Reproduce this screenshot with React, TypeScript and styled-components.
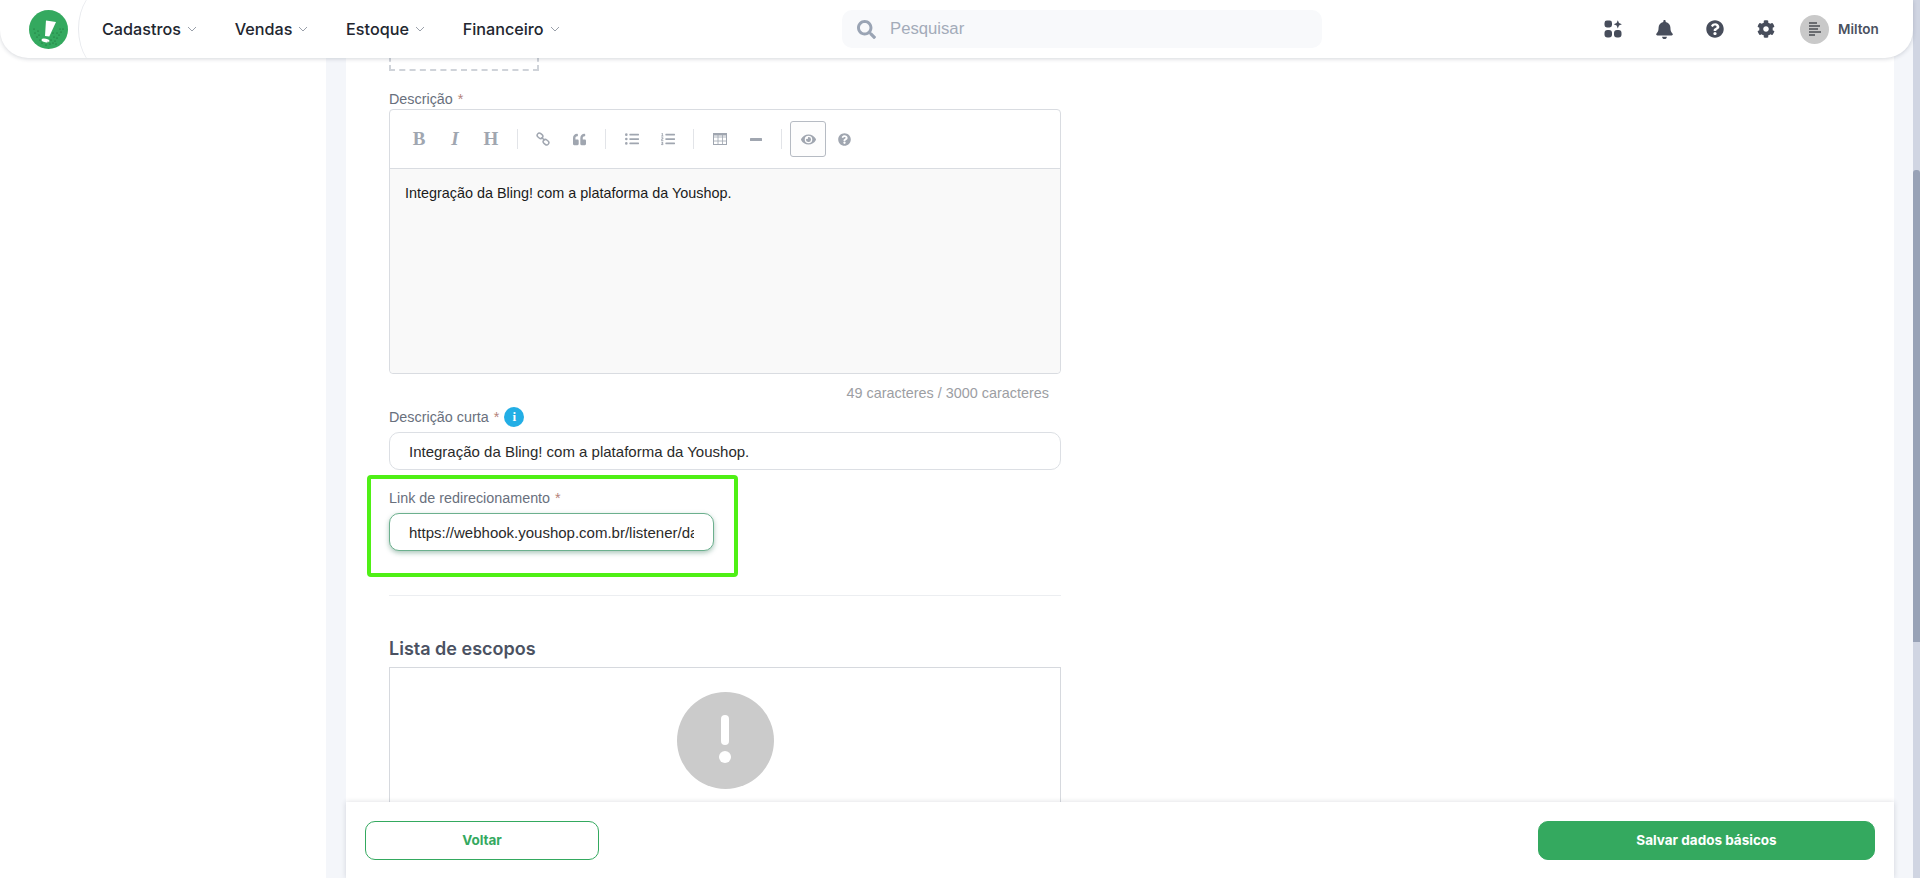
import React from "react";
import styled, { createGlobalStyle } from "styled-components";
import { FaBell, FaCog, FaEye, FaListOl, FaListUl, FaQuestionCircle, FaQuoteLeft, FaSearch } from "react-icons/fa";

const GlobalStyle = createGlobalStyle`
    html, body {
        margin: 0;
        height: 100%;
        overflow: hidden;
        background: #fff;
        font-family: "Liberation Sans", Arial, sans-serif;
    }
    * {
        box-sizing: border-box;
    }
`;

const Page = styled.div`
    position: relative;
    display: flex;
    height: 100vh;
    overflow: hidden;
`;

const Content = styled.div`
    flex: 1;
    display: flex;
    background: #f4f6fa;
    padding: 0 19px 0 346px;
    box-shadow: inset 326px 0 0 #fff;
`;

const Panel = styled.main`
    position: relative;
    flex: 1;
    background: #fff;
    padding-left: 43px;
`;

const Form = styled.div`
    width: 672px;
    display: flex;
    flex-direction: column;
`;

const DashedBox = styled.div`
    width: 150px;
    height: 71px;
    border: 2px dashed #cfd3d9;
`;

const Label = styled.label<{ $top: number; $bottom: number }>`
    display: flex;
    align-items: center;
    gap: 5px;
    height: 20px;
    margin-top: ${(p) => p.$top}px;
    margin-bottom: ${(p) => p.$bottom}px;
    font-size: 14.35px;
    color: #69707d;
`;

const Required = styled.span`
    color: #b5837a;
    margin-left: 1px;
`;

const InfoBadge = styled.span`
    display: grid;
    place-items: center;
    width: 20px;
    height: 20px;
    border-radius: 50%;
    background: #23aee5;
    color: #fff;
    font: bold 13px "Liberation Serif", serif;
`;

const Editor = styled.div`
    height: 265px;
    display: flex;
    flex-direction: column;
    border: 1px solid #d9dce1;
    border-radius: 4px;
`;

const Toolbar = styled.div`
    height: 59px;
    flex: none;
    display: flex;
    align-items: center;
    padding-left: 11px;
    border-bottom: 1px solid #d9dce1;
`;

const ToolButton = styled.span<{ $active?: boolean; $italic?: boolean }>`
    width: 36px;
    height: 36px;
    flex: none;
    display: grid;
    place-items: center;
    font: ${(p) => (p.$italic ? "italic" : "normal")} bold 19px "Liberation Serif", serif;
    color: #a0a6b0;
    border: 1px solid ${(p) => (p.$active ? "#b6bbc3" : "transparent")};
    border-radius: 3px;
    background: ${(p) => (p.$active ? "#fdfdfd" : "transparent")};
`;

const ToolSep = styled.span`
    width: 1px;
    height: 20px;
    flex: none;
    margin: 0 7.65px;
    background: #e2e4e8;
`;

const EditorBody = styled.div`
    flex: 1;
    background: #f9f9f9;
    padding: 14px 15px;
    font-size: 14.4px;
    line-height: 20px;
    color: #1b1b1b;
    border-radius: 0 0 4px 4px;
`;

const Counter = styled.div`
    margin-top: 10px;
    height: 18px;
    line-height: 18px;
    padding-right: 12px;
    text-align: right;
    font-size: 14.4px;
    color: #9c9ea3;
`;

const Field = styled.div<{ $focused?: boolean; $width?: number }>`
    height: 38px;
    width: ${(p) => (p.$width ? `${p.$width}px` : "100%")};
    display: flex;
    align-items: center;
    padding: 0 19px;
    border-radius: 10px;
    background: #fff;
    font-size: 15px;
    color: #2a2a2a;
    white-space: nowrap;
    border: 1px solid ${(p) => (p.$focused ? "#6cb08e" : "#dcdfe4")};
    box-shadow: ${(p) => (p.$focused ? "0 2px 5px rgba(40, 110, 80, 0.4)" : "none")};
`;

const FieldText = styled.span`
    display: block;
    overflow: hidden;
`;

const LinkField = styled.div`
    position: relative;
`;

const Highlight = styled.div`
    position: absolute;
    left: -22px;
    top: 5px;
    width: 371px;
    height: 102px;
    border: 4px solid #4ff015;
    border-radius: 4px;
    pointer-events: none;
`;

const Divider = styled.hr`
    width: 100%;
    margin: 44px 0 0;
    border: 0;
    border-top: 1px solid #eceef1;
`;

const Heading = styled.h2`
    margin: 41px 0 6px;
    height: 24px;
    font: 600 18px/24px Inter, sans-serif;
    color: #4b5262;
`;

const ScopeBox = styled.div`
    height: 320px;
    display: flex;
    justify-content: center;
    padding-top: 24px;
    border: 1px solid #d6d9de;
`;

const AlertCircle = styled.div`
    width: 97px;
    height: 97px;
    border-radius: 50%;
    background: #cbcbcb;
    display: flex;
    flex-direction: column;
    align-items: center;
    padding-top: 23px;
`;

const AlertBar = styled.span`
    width: 8px;
    height: 30px;
    border-radius: 4px;
    background: #fff;
`;

const AlertDot = styled.span`
    width: 12px;
    height: 12px;
    margin-top: 6px;
    border-radius: 50%;
    background: #fff;
`;

const Footer = styled.footer`
    position: absolute;
    left: 0;
    right: 0;
    bottom: 0;
    height: 76px;
    display: flex;
    justify-content: space-between;
    align-items: flex-start;
    padding: 18.5px 19px 0;
    background: #fff;
    box-shadow: 0 0 5px rgba(30, 40, 60, 0.16);
`;

const Button = styled.button<{ $primary?: boolean }>`
    height: 39px;
    width: ${(p) => (p.$primary ? "337px" : "234px")};
    border-radius: 10px;
    font: 700 13.5px Inter, sans-serif;
    border: 1px solid #34a95f;
    background: ${(p) => (p.$primary ? "#34a95f" : "#fff")};
    color: ${(p) => (p.$primary ? "#fff" : "#34a95f")};
`;

const Scrollbar = styled.div`
    width: 7px;
    flex: none;
    background: #d0d5e2;
    padding-top: 170px;
`;

const ScrollThumb = styled.div`
    height: 472px;
    background: #98a2b6;
    border-radius: 3px 3px 0 0;
`;

const Header = styled.header`
    position: absolute;
    top: 0;
    left: 0;
    right: 7px;
    height: 58px;
    display: flex;
    align-items: center;
    background: #fff;
    border-radius: 0 0 28px 28px;
    box-shadow: 0 1px 4px rgba(30, 40, 60, 0.18);
    overflow: hidden;
`;

const LogoSlot = styled.div`
    width: 78px;
    height: 58px;
    flex: none;
    display: flex;
    align-items: center;
    padding-left: 29px;
`;

const Nav = styled.nav`
    position: relative;
    width: 764px;
    height: 100%;
    flex: none;
    display: flex;
    align-items: center;
    padding-left: 24px;
    gap: 37.7px;
    &::before {
        content: "";
        position: absolute;
        left: 0;
        top: -14px;
        bottom: -14px;
        width: 60px;
        border-left: 1px solid #e8eaee;
        border-radius: 50% / 50%;
    }
`;

const NavItem = styled.a`
    display: flex;
    align-items: center;
    gap: 6px;
    font: 500 16.2px Inter, sans-serif;
    color: #22262f;
`;

const Search = styled.div`
    width: 480px;
    height: 38px;
    flex: none;
    display: flex;
    align-items: center;
    gap: 14px;
    padding-left: 15px;
    border-radius: 10px;
    background: #f8f9fb;
    font-size: 16.7px;
    color: #a3abb9;
`;

const Tools = styled.div`
    flex: 1;
    display: flex;
    align-items: center;
    padding-left: 282px;
    color: #474d5b;
`;

const ToolSlot = styled.span`
    width: 51px;
    height: 20px;
    flex: none;
    display: flex;
    align-items: center;
`;

const Avatar = styled.div`
    width: 29px;
    height: 29px;
    flex: none;
    margin-left: -8px;
    border-radius: 50%;
    background: #c9c9c9;
    overflow: hidden;
    display: flex;
    flex-direction: column;
    justify-content: center;
    padding-left: 9px;
    gap: 1px;
`;

const AvatarLine = styled.span<{ $w: number }>`
    width: ${(p) => p.$w}px;
    height: 2px;
    background: #6a6c70;
`;

const UserName = styled.span`
    margin-left: 9px;
    font: 600 13.5px Inter, sans-serif;
    color: #4a5160;
`;

const LOGO_DOTS = [
    [6, 23], [8, 27], [10, 25], [11, 30], [13, 33], [9, 21], [5, 19], [17, 35], [21, 34], [24, 33], [22, 30],
    [26, 31], [28, 28], [25, 27], [30, 25], [28, 23], [32, 22], [31, 19], [34, 19], [27, 34], [19, 32], [24, 23],
];

function Chevron() {
    return (
        <svg width="10" height="6" viewBox="0 0 10 6" fill="none" stroke="#9aa0aa" strokeWidth="1">
            <path d="M1 1l4 4 4-4" />
        </svg>
    );
}

function Logo() {
    return (
        <svg width="39" height="39" viewBox="0 0 39 39">
            <circle cx="19.5" cy="19.5" r="19.5" fill="#34a95f" />
            <path d="M17 10.5l10 1.5-6.7 14.5-4.3-.5z" fill="#fff" />
            <ellipse cx="16.5" cy="30.5" rx="4" ry="1.8" fill="#fff" transform="rotate(10 16.5 30.5)" />
            <g fill="#17602f">
                {LOGO_DOTS.map(([x, y]) => (
                    <circle key={`${x}-${y}`} cx={x} cy={y} r=".55" />
                ))}
            </g>
        </svg>
    );
}

function AppsIcon() {
    return (
        <svg width="18" height="18" viewBox="0 0 18 18" fill="currentColor">
            <rect x="0.5" y="0.5" width="7.5" height="7" rx="2.4" />
            <rect x="0.5" y="10" width="7.5" height="7.5" rx="3" />
            <rect x="10" y="10" width="7.5" height="7.5" rx="3" />
            <path d="M13.8 0.2l1.2 2.9 2.9 1.2-2.9 1.2-1.2 2.9-1.2-2.9-2.9-1.2 2.9-1.2z" />
        </svg>
    );
}

function LinkIcon() {
    return (
        <svg width="14" height="14" viewBox="0 0 14 14" fill="none" stroke="currentColor" strokeWidth="1.5">
            <rect x="1" y="1.6" width="6" height="4.4" rx="2.2" transform="rotate(40 4 3.8)" />
            <rect x="7" y="8" width="6" height="4.4" rx="2.2" transform="rotate(40 10 10.2)" />
            <path d="M5.5 5.2l3 3" />
        </svg>
    );
}

function TableIcon() {
    return (
        <svg width="14" height="12" viewBox="0 0 14 12" fill="none" stroke="currentColor" strokeWidth="1">
            <rect x=".5" y=".5" width="13" height="11" />
            <path d="M.5 4h13M.5 8h13M5 .5v11M9.5 .5v11" strokeWidth=".8" />
            <path d="M.5 1.5h13" strokeWidth="2" />
        </svg>
    );
}

function RuleIcon() {
    return (
        <svg width="12" height="3" viewBox="0 0 12 3" fill="currentColor">
            <rect width="12" height="3" rx=".5" />
        </svg>
    );
}

function ScopesEmpty() {
    return (
        <ScopeBox>
            <AlertCircle>
                <AlertBar />
                <AlertDot />
            </AlertCircle>
        </ScopeBox>
    );
}

export default function App() {
    return (
        <Page>
            <GlobalStyle />
            <Content>
                <Panel>
                    <Form>
                        <DashedBox />
                        <Label $top={18} $bottom={0}>
                            <span>Descrição <Required>*</Required></span>
                        </Label>
                        <Editor>
                            <Toolbar>
                                <ToolButton>B</ToolButton>
                                <ToolButton $italic>I</ToolButton>
                                <ToolButton>H</ToolButton>
                                <ToolSep />
                                <ToolButton><LinkIcon /></ToolButton>
                                <ToolButton><FaQuoteLeft size={13} /></ToolButton>
                                <ToolSep />
                                <ToolButton><FaListUl size={14} /></ToolButton>
                                <ToolButton><FaListOl size={14} /></ToolButton>
                                <ToolSep />
                                <ToolButton><TableIcon /></ToolButton>
                                <ToolButton><RuleIcon /></ToolButton>
                                <ToolSep />
                                <ToolButton $active><FaEye size={15} /></ToolButton>
                                <ToolButton><FaQuestionCircle size={13} /></ToolButton>
                            </Toolbar>
                            <EditorBody>Integração da Bling! com a plataforma da Youshop.</EditorBody>
                        </Editor>
                        <Counter>49 caracteres / 3000 caracteres</Counter>
                        <Label $top={5} $bottom={5}>
                            <span>Descrição curta <Required>*</Required></span>
                            <InfoBadge>i</InfoBadge>
                        </Label>
                        <Field>Integração da Bling! com a plataforma da Youshop.</Field>
                        <LinkField>
                            <Label $top={18} $bottom={5}>
                                <span>Link de redirecionamento <Required>*</Required></span>
                            </Label>
                            <Field $focused $width={325}>
                                <FieldText>https://webhook.youshop.com.br/listener/da</FieldText>
                            </Field>
                            <Highlight />
                        </LinkField>
                        <Divider />
                        <Heading>Lista de escopos</Heading>
                        <ScopesEmpty />
                    </Form>
                    <Footer>
                        <Button>Voltar</Button>
                        <Button $primary>Salvar dados básicos</Button>
                    </Footer>
                </Panel>
            </Content>
            <Scrollbar>
                <ScrollThumb />
            </Scrollbar>
            <Header>
                <LogoSlot>
                    <Logo />
                </LogoSlot>
                <Nav>
                    <NavItem>Cadastros <Chevron /></NavItem>
                    <NavItem>Vendas <Chevron /></NavItem>
                    <NavItem>Estoque <Chevron /></NavItem>
                    <NavItem>Financeiro <Chevron /></NavItem>
                </Nav>
                <Search>
                    <FaSearch size={19} color="#9aa4b4" />
                    Pesquisar
                </Search>
                <Tools>
                    <ToolSlot><AppsIcon /></ToolSlot>
                    <ToolSlot><FaBell size={19} /></ToolSlot>
                    <ToolSlot><FaQuestionCircle size={18} /></ToolSlot>
                    <ToolSlot><FaCog size={18} /></ToolSlot>
                    <Avatar>
                        <AvatarLine $w={8} />
                        <AvatarLine $w={11} />
                        <AvatarLine $w={9} />
                        <AvatarLine $w={12} />
                        <AvatarLine $w={6} />
                    </Avatar>
                    <UserName>Milton</UserName>
                </Tools>
            </Header>
        </Page>
    );
}
